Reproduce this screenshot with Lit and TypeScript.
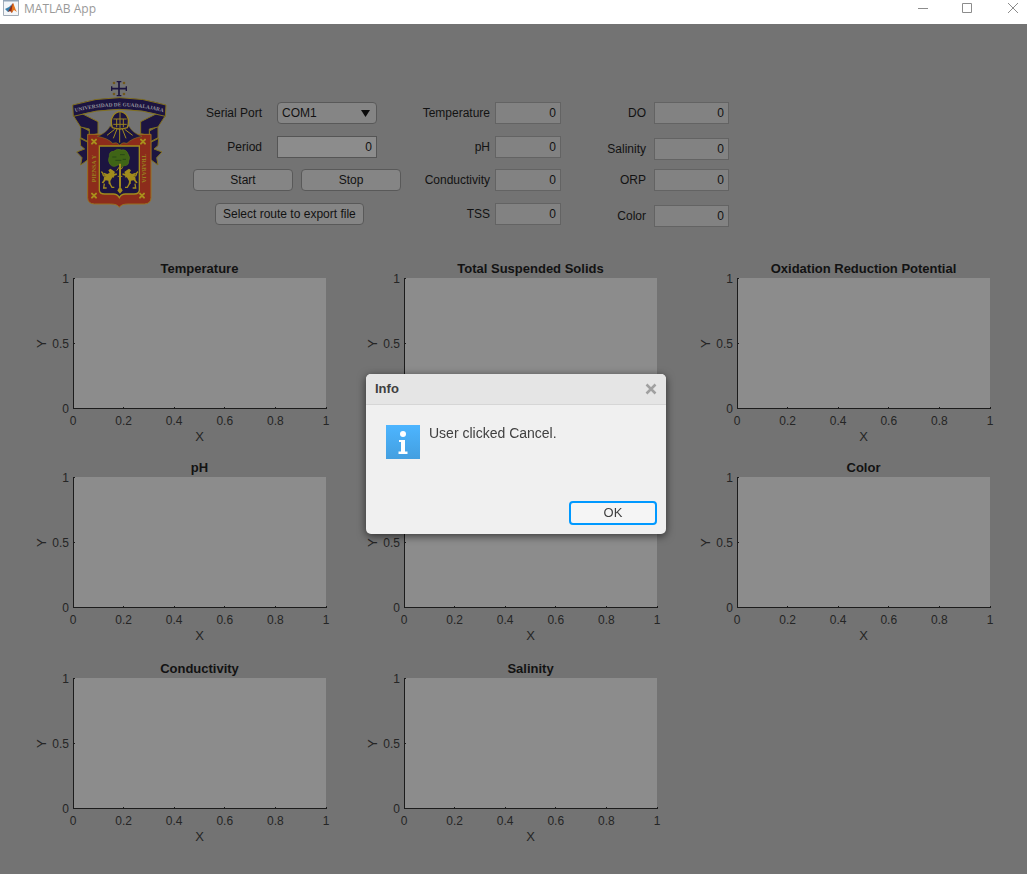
import { LitElement, html, css, svg } from "lit";
import { customElement, property } from "lit/decorators.js";

@customElement("axes-plot")
class AxesPlot extends LitElement {
  @property() heading = "";

  static styles = css`
    :host {
      display: block;
      min-width: 0;
      color: #252525;
      font-size: 12px;
    }
    .plot {
      display: grid;
      grid-template-columns: 12px 25px minmax(0, 1fr);
      grid-template-rows: 17px 131px 20px 15px;
    }
    .title {
      grid-column: 3;
      margin: 0;
      font-size: 13px;
      line-height: 15px;
      font-weight: bold;
      text-align: center;
      white-space: nowrap;
      color: #121212;
    }
    .ylabel {
      grid-column: 1;
      grid-row: 2;
      display: flex;
      align-items: center;
      justify-content: center;
      writing-mode: vertical-rl;
      transform: rotate(180deg);
      font-size: 13px;
      line-height: 12px;
    }
    .yticks {
      grid-column: 2;
      grid-row: 2;
      display: flex;
      flex-direction: column;
      justify-content: space-between;
      align-items: flex-end;
      padding: 1px 4px 0 0;
    }
    .yticks span {
      display: flex;
      align-items: center;
      height: 0;
    }
    .area {
      grid-column: 3;
      grid-row: 2;
      width: 100%;
      height: 100%;
      background: #8c8c8c;
      stroke: #1c1c1c;
      stroke-width: 1;
      shape-rendering: crispEdges;
      overflow: visible;
    }
    .xticks {
      grid-column: 3;
      grid-row: 3;
      display: flex;
      justify-content: space-between;
      line-height: 14px;
      padding-top: 5px;
    }
    .xticks span {
      display: flex;
      justify-content: center;
      width: 0;
    }
    .xlabel {
      grid-column: 3;
      grid-row: 4;
      font-size: 13px;
      line-height: 15px;
      text-align: center;
    }
  `;

  render() {
    return html`
      <section class="plot">
        <h2 class="title">${this.heading}</h2>
        <div class="ylabel">Y</div>
        <div class="yticks">
          ${["1", "0.5", "0"].map((t) => html`<span>${t}</span>`)}
        </div>
        <svg class="area" aria-hidden="true">
          <line x1="0.5" y1="0" x2="0.5" y2="100%"></line>
          <line x1="0" y1="130.5" x2="100%" y2="130.5"></line>
          <line x1="0" y1="0.5" x2="2" y2="0.5"></line>
          <line x1="0" y1="65.5" x2="2" y2="65.5"></line>
          ${[20, 40, 60, 80, 100].map(
            (p) => svg`<line x1="${p}%" y1="129" x2="${p}%" y2="131"></line>`
          )}
        </svg>
        <div class="xticks">
          ${["0", "0.2", "0.4", "0.6", "0.8", "1"].map(
            (t) => html`<span>${t}</span>`
          )}
        </div>
        <div class="xlabel">X</div>
      </section>
    `;
  }
}

@customElement("university-crest")
class UniversityCrest extends LitElement {
  static styles = css`
    :host {
      display: block;
    }
    .crest {
      display: block;
      width: 96px;
      height: 130px;
    }
    .motto {
      font-family: "Liberation Serif", serif;
      font-weight: bold;
    }
  `;

  render() {
    const rosette = (x: number, y: number) => svg`
      <g transform="translate(${x} ${y})" stroke="#a8901c" stroke-width="6" stroke-linecap="round">
        <path d="M-6 -6L6 6M6 -6L-6 6"></path>
      </g>`;
    const lion = svg`
      <path d="M157 287l-6 -4l-6 5l4 7l-7 4l-10 -4l-3 4l10 5l-7 5l-1 8l-6 8l5 2l7 -9l8 1l1 10l6 1l-1 -10l5 -9l7 -7l8 -3l-1 -4l-8 1l3 -5z" fill="#a18b1d"></path>
      <path d="M140 301q-9 8 -11 0q0 -6 -5 -9M151 300l11 9M133 328l-2 13h9M149 327l7 12h7" fill="none" stroke="#a18b1d" stroke-width="4"></path>`;
    const ribbon = svg`
      <path d="M84 202L60 190L62 212L74 222L50 231L66 248L62 270L84 254Z"></path>
      <path d="M62 154L88 168V202L62 188Z"></path>
      <path d="M40 122L58 112L114 140V176L88 182V162L62 156Z"></path>`;
    return html`
      <svg class="crest" viewBox="33 15 288 390" role="img" aria-label="Universidad de Guadalajara">
        <g stroke="#1c1440" stroke-width="5" fill="none">
          <path d="M177 19v44M155 41h44"></path>
          <path d="M170 20h14M170 62h14M155 34v14M199 34v14" stroke-width="4"></path>
        </g>
        <g fill="#71581d">
          <circle cx="162" cy="24" r="4"></circle>
          <circle cx="192" cy="24" r="4"></circle>
          <circle cx="162" cy="57" r="4"></circle>
          <circle cx="192" cy="57" r="4"></circle>
        </g>
        <g fill="#1c1440" stroke="#81701f" stroke-width="3" stroke-linejoin="round">
          ${ribbon}
          <g transform="translate(356 0) scale(-1 1)">${ribbon}</g>
          <path d="M38 90Q178 46 318 90L316 124Q178 82 40 124Z"></path>
        </g>
        <path id="band" d="M40 113Q178 75 316 113" fill="none"></path>
        <text class="motto" font-size="16" fill="#94939b" text-anchor="middle">
          <textPath href="#band" startOffset="50%">UNIVERSIDAD DE GUADALAJARA</textPath>
        </text>
        <path d="M83 178H273V368Q273 386 253 387H204Q184 387 178 397Q172 387 152 387H103Q83 386 83 368Z" fill="#8c2c1b" stroke="#9a7020" stroke-width="3"></path>
        <path d="M150 154Q138 175 112 184Q145 190 158 205Q170 199 179 210Q189 199 201 205Q215 190 246 184Q219 175 207 154Z" fill="#1c1440" stroke="#81701f" stroke-width="2"></path>
        <g stroke="#a18b1d" stroke-width="3">
          <path d="M179 162V203M171 162L160 190M187 162L198 190M164 163L141 181M194 163L218 181"></path>
        </g>
        <path d="M157 158Q150 137 158 125Q164 112 180 110Q196 112 202 125Q209 137 202 158Q180 166 157 158Z" fill="#1c1440" stroke="#9a8420" stroke-width="4"></path>
        <path d="M160 132H200M160 148H200M170 132V157M180 112V160M190 132V157" fill="none" stroke="#9a8420" stroke-width="3"></path>
        <path d="M118 213H238V346Q237 357 222 357H196Q184 357 178 368Q172 357 160 357H134Q119 357 118 346Z" fill="#1c1440" stroke="#a18b1d" stroke-width="4"></path>
        <path d="M180 264V335M175 346L180 338L185 346L180 352Z" fill="#a18b1d" stroke="#a18b1d" stroke-width="5"></path>
        <path d="M150 268Q142 257 148 244Q147 229 161 229Q172 219 184 225Q199 222 204 237Q212 247 206 258Q207 272 193 272L183 277L175 269Q160 280 150 268Z" fill="#3f6416" stroke="#527216" stroke-width="2"></path>
        <path d="M157 246h12M180 239h14M166 256h18M188 253h10" stroke="#284817" stroke-width="3"></path>
        <path d="M180 266V335" stroke="#a18b1d" stroke-width="6"></path>
        <g transform="translate(0 -2)">${lion}</g>
        <g transform="translate(358 -2) scale(-1 1)">${lion}</g>
        <path d="M178 276l-8 11M181 284l8 -7M173 304h14" stroke="#a18b1d" stroke-width="3"></path>
        ${rosette(102, 200)} ${rosette(249, 200)} ${rosette(102, 362)} ${rosette(246, 362)}
        <text class="motto" font-size="18" fill="#99801f" text-anchor="middle" transform="translate(107 281) rotate(-90)">PIENSA Y</text>
        <text class="motto" font-size="18" fill="#99801f" text-anchor="middle" transform="translate(246 281) rotate(90)">TRABAJA</text>
      </svg>
    `;
  }
}

@customElement("app-root")
class AppRoot extends LitElement {
  static styles = css`
    :host {
      display: flex;
      flex-direction: column;
      min-height: 100vh;
      font-family: "Liberation Sans", Arial, sans-serif;
      font-size: 12px;
      color: #121212;
      background: #737373;
    }
    * {
      box-sizing: border-box;
    }
    button,
    input,
    select {
      font: inherit;
      color: inherit;
      margin: 0;
    }
    .titlebar {
      display: flex;
      align-items: flex-start;
      height: 24px;
      padding: 0 4px 0 3px;
      background: #fff;
      color: #999;
    }
    .app-icon {
      width: 16px;
      height: 16px;
    }
    .app-name {
      flex: 1;
      padding-left: 5px;
      font-family: "Open Sans", "Noto Sans", sans-serif;
      font-size: 12px;
      line-height: 18px;
    }
    .window-buttons {
      display: flex;
      gap: 25px;
    }
    .window-button {
      display: flex;
      justify-content: center;
      width: 20px;
      height: 16px;
      padding: 2px 0 0;
      border: 0;
      background: none;
    }
    .window-button svg {
      width: 12px;
      height: 12px;
      fill: none;
      stroke: #8c8c8c;
    }
    .header {
      display: flex;
      align-items: flex-start;
      padding: 56px 36px 0 71px;
    }
    .settings {
      display: grid;
      grid-template-rows: 34px 33px 34px 22px;
      width: 208px;
      margin: 22px 0 0 26px;
    }
    .setting {
      display: grid;
      grid-template-columns: 69px 100px;
      column-gap: 15px;
      height: 22px;
      line-height: 22px;
    }
    .setting label,
    .reading label {
      text-align: right;
    }
    .port {
      width: 100%;
      height: 22px;
      position: relative;
    }
    .port select {
      display: block;
      width: 100%;
      height: 22px;
      padding: 0 4px;
      border: 1px solid #595959;
      border-radius: 4px;
      appearance: none;
      background: #858585;
      line-height: 20px;
    }
    .port svg {
      position: absolute;
      right: 7px;
      top: 7px;
      width: 9px;
      height: 8px;
      pointer-events: none;
    }
    .number {
      width: 100%;
      height: 22px;
      padding: 0 4px;
      border: 1px solid #555;
      border-radius: 0;
      background: #8c8c8c;
      text-align: right;
    }
    .buttons {
      display: grid;
      grid-template-columns: 1fr 1fr;
      gap: 8px;
    }
    .push {
      height: 22px;
      padding: 0 7px;
      border: 1px solid #595959;
      border-radius: 4px;
      background: #858585;
      white-space: nowrap;
    }
    .export {
      justify-self: start;
      margin-left: 22px;
    }
    .readings {
      display: grid;
      margin-top: 22px;
    }
    .primary {
      grid-template-rows: 34px 33px 34px 22px;
      margin-left: 18px;
    }
    .secondary {
      grid-template-rows: 36px 31px 36px 22px;
      margin-left: 44px;
    }
    .reading {
      display: grid;
      height: 22px;
      line-height: 22px;
    }
    .primary .reading {
      grid-template-columns: 71px 66px;
      column-gap: 5px;
    }
    .secondary .reading {
      grid-template-columns: 41px 75px;
      column-gap: 8px;
    }
    .reading .number {
      border-color: #636363;
      background: #828282;
    }
    .plots {
      display: grid;
      grid-template-columns: minmax(0, 1fr) 41px minmax(0, 1fr) 43px minmax(0, 1fr);
      grid-template-rows: auto 16px auto 18px auto;
      padding: 34px 37px 30px 36px;
    }
    .c1 { grid-column: 1; }
    .c2 { grid-column: 3; }
    .c3 { grid-column: 5; }
    .r1 { grid-row: 1; }
    .r2 { grid-row: 3; }
    .r3 { grid-row: 5; }
    .overlay {
      position: fixed;
      inset: 24px 0 0 0;
      display: flex;
      align-items: center;
      justify-content: center;
      padding: 10px 0 0 5px;
    }
    .dialog {
      display: flex;
      flex-direction: column;
      width: 300px;
      height: 160px;
      border-radius: 5px;
      overflow: hidden;
      background: #f0f0f0;
      color: #404040;
      box-shadow: 0 2px 8px rgba(0, 0, 0, 0.6);
    }
    .dialog-head {
      display: flex;
      justify-content: space-between;
      height: 31px;
      padding: 0 9px;
      border-bottom: 1px solid #d6d6d6;
      background: #e5e5e5;
    }
    .dialog-title {
      margin: 0;
      font-size: 13px;
      line-height: 29px;
      font-weight: bold;
    }
    .close {
      display: flex;
      align-items: center;
      padding: 0;
      border: 0;
      background: none;
    }
    .close svg {
      width: 12px;
      height: 12px;
      stroke: #a0a0a0;
      stroke-width: 2.5;
    }
    .dialog-body {
      flex: 1;
      display: flex;
      gap: 9px;
      padding: 20px;
    }
    .info-icon {
      width: 34px;
      height: 34px;
    }
    .message {
      margin: 0;
      font-size: 14px;
      line-height: 16px;
    }
    .dialog-foot {
      display: flex;
      justify-content: flex-end;
      padding: 0 9px 9px;
    }
    .ok {
      width: 88px;
      height: 24px;
      padding: 0;
      border: 2px solid #0099ff;
      border-radius: 4px;
      background: #f5f5f5;
      font-size: 13px;
      line-height: 18px;
    }
  `;

  private reading(id: string, label: string) {
    return html`
      <div class="reading">
        <label for=${id}>${label}</label>
        <input class="number" id=${id} value="0" readonly />
      </div>
    `;
  }

  render() {
    return html`
      <header class="titlebar">
        <svg class="app-icon" viewBox="0 0 16 16" aria-hidden="true">
          <path d="M0.5 0.5H15.5V15.5H0.5Z" fill="#f3f6f9" stroke="#a3adb8"></path>
          <path d="M0 0H16V1.500H0Z" fill="#91a4b8"></path>
          <path d="M2 9L6 7L9 4L7 11L5 12Z" fill="#397eaa"></path>
          <path d="M5 12L7 8L10 3L11 8L9 13L7 11Z" fill="#8c2b1b"></path>
          <path d="M10 3C11 4 12 9 14 12L11 10L8 13C9 10 9 6 10 3Z" fill="#e5741c"></path>
        </svg>
        <span class="app-name">MATLAB App</span>
        <div class="window-buttons">
          <button class="window-button" aria-label="Minimize">
            <svg viewBox="0 0 12 12"><path d="M1 6.5H11"></path></svg>
          </button>
          <button class="window-button" aria-label="Maximize">
            <svg viewBox="0 0 12 12"><path d="M0.500 1.500H9.500V10.500H0.500Z"></path></svg>
          </button>
          <button class="window-button" aria-label="Close">
            <svg viewBox="0 0 12 12"><path d="M1 1L11 11M11 1L1 11"></path></svg>
          </button>
        </div>
      </header>

      <main>
        <div class="header">
          <university-crest></university-crest>
          <div class="settings">
            <div class="setting">
              <label for="port">Serial Port</label>
              <div class="port">
                <select id="port"><option>COM1</option></select>
                <svg viewBox="0 0 9 8" aria-hidden="true"><path d="M0 1H9L4.500 8Z" fill="#0c0c0c"></path></svg>
              </div>
            </div>
            <div class="setting">
              <label for="period">Period</label>
              <input class="number" id="period" value="0" />
            </div>
            <div class="buttons">
              <button class="push">Start</button>
              <button class="push">Stop</button>
            </div>
            <button class="push export">Select route to export file</button>
          </div>
          <div class="readings primary">
            ${this.reading("temperature", "Temperature")}
            ${this.reading("ph", "pH")}
            ${this.reading("conductivity", "Conductivity")}
            ${this.reading("tss", "TSS")}
          </div>
          <div class="readings secondary">
            ${this.reading("do", "DO")}
            ${this.reading("salinity", "Salinity")}
            ${this.reading("orp", "ORP")}
            ${this.reading("color", "Color")}
          </div>
        </div>

        <div class="plots">
          <axes-plot class="c1 r1" heading="Temperature"></axes-plot>
          <axes-plot class="c2 r1" heading="Total Suspended Solids"></axes-plot>
          <axes-plot class="c3 r1" heading="Oxidation Reduction Potential"></axes-plot>
          <axes-plot class="c1 r2" heading="pH"></axes-plot>
          <axes-plot class="c2 r2" heading="DO"></axes-plot>
          <axes-plot class="c3 r2" heading="Color"></axes-plot>
          <axes-plot class="c1 r3" heading="Conductivity"></axes-plot>
          <axes-plot class="c2 r3" heading="Salinity"></axes-plot>
        </div>
      </main>

      <div class="overlay">
        <div class="dialog" role="alertdialog" aria-labelledby="dialog-title">
          <div class="dialog-head">
            <h1 class="dialog-title" id="dialog-title">Info</h1>
            <button class="close" aria-label="Close dialog">
              <svg viewBox="0 0 12 12"><path d="M1.500 1.500L10.500 10.500M10.500 1.500L1.500 10.500"></path></svg>
            </button>
          </div>
          <div class="dialog-body">
            <svg class="info-icon" viewBox="0 0 34 34" aria-hidden="true">
              <defs>
                <linearGradient id="blue" x1="0" y1="0" x2="0" y2="1">
                  <stop offset="0" stop-color="#4db5ff"></stop>
                  <stop offset="1" stop-color="#439fe0"></stop>
                </linearGradient>
              </defs>
              <rect width="34" height="34" fill="url(#blue)"></rect>
              <circle cx="17" cy="9" r="3" fill="#fff"></circle>
              <path d="M13 15H19V26.500H21.500V29H12.500V26.500H15V17H13Z" fill="#fff"></path>
            </svg>
            <p class="message">User clicked Cancel.</p>
          </div>
          <div class="dialog-foot">
            <button class="ok">OK</button>
          </div>
        </div>
      </div>
    `;
  }
}
